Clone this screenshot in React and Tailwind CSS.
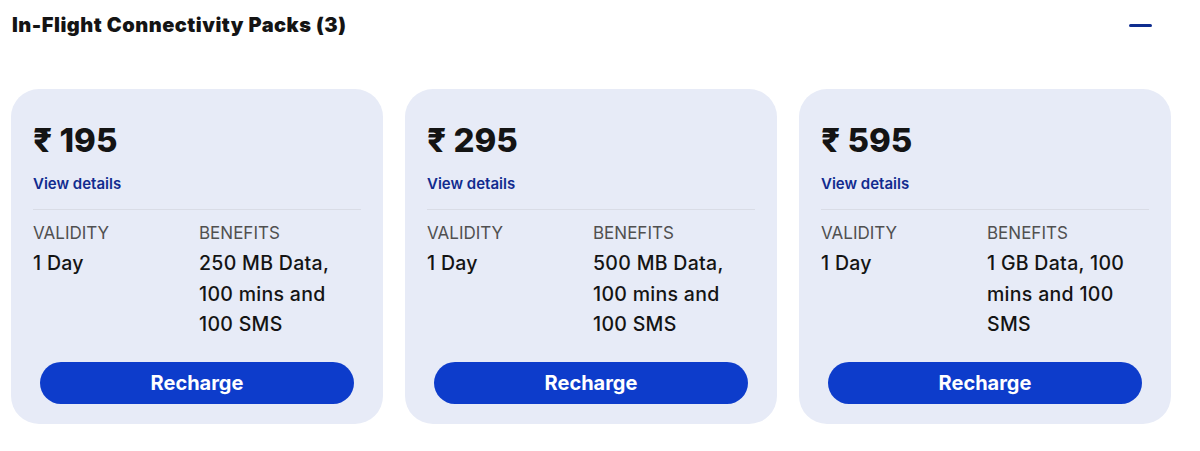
import React from "react";

const packs = [
  { price: "195", benefits: "250 MB Data, 100 mins and 100 SMS" },
  { price: "295", benefits: "500 MB Data, 100 mins and 100 SMS" },
  { price: "595", benefits: "1 GB Data, 100 mins and 100 SMS" },
];

function Card({ price, benefits }) {
  return (
    <div className="flex flex-col rounded-[28px] bg-[#e7ebf7] pt-[32px] pb-[20px]">
      <div className="px-[22px]">
        <div className="text-[33px] leading-[38px] font-extrabold text-[#141414] tracking-[0px]">₹ {price}</div>
        <div className="mt-[15px] text-[15px] leading-[20px] font-semibold text-[#112b8f]">View details</div>
        <div className="mt-[15px] h-px bg-[#d9dce6]" />
        <div className="mt-[12px] grid grid-cols-[166px_1fr]">
          <div>
            <div className="text-[17px] leading-[22px] text-[#505050]">VALIDITY</div>
            <div className="mt-[4px] text-[19.5px] leading-[30.5px] font-medium tracking-[0.3px] text-[#141414]">1 Day</div>
          </div>
          <div>
            <div className="text-[17px] leading-[22px] text-[#505050]">BENEFITS</div>
            <div className="mt-[4px] pr-[8px] text-[19.5px] leading-[30.5px] font-medium tracking-[0.3px] text-[#141414]">{benefits}</div>
          </div>
        </div>
      </div>
      <div className="mt-[22px] px-[29px]">
        <button className="flex h-[42px] w-full items-center justify-center rounded-full bg-[#0d3ccb] text-[20px] font-bold text-white">
          Recharge
        </button>
      </div>
    </div>
  );
}

export default function App() {
  return (
    <div className="h-[451px] w-[1200px] bg-white" style={{ fontFamily: "Inter, 'Liberation Sans', sans-serif" }}>
      <div className="flex items-center justify-between pl-[12px] pr-[48px] pt-[13px]">
        <h2 className="text-[20px] leading-[24px] font-black tracking-[0.5px] text-[#141414]">In-Flight Connectivity Packs (3)</h2>
        <div className="h-[3px] w-[23px] rounded-full bg-[#0f2d8f]" />
      </div>
      <div className="mt-[52px] grid grid-cols-3 gap-[22px] pl-[11px] pr-[29px]">
        {packs.map((p) => (
          <Card key={p.price} {...p} />
        ))}
      </div>
    </div>
  );
}
